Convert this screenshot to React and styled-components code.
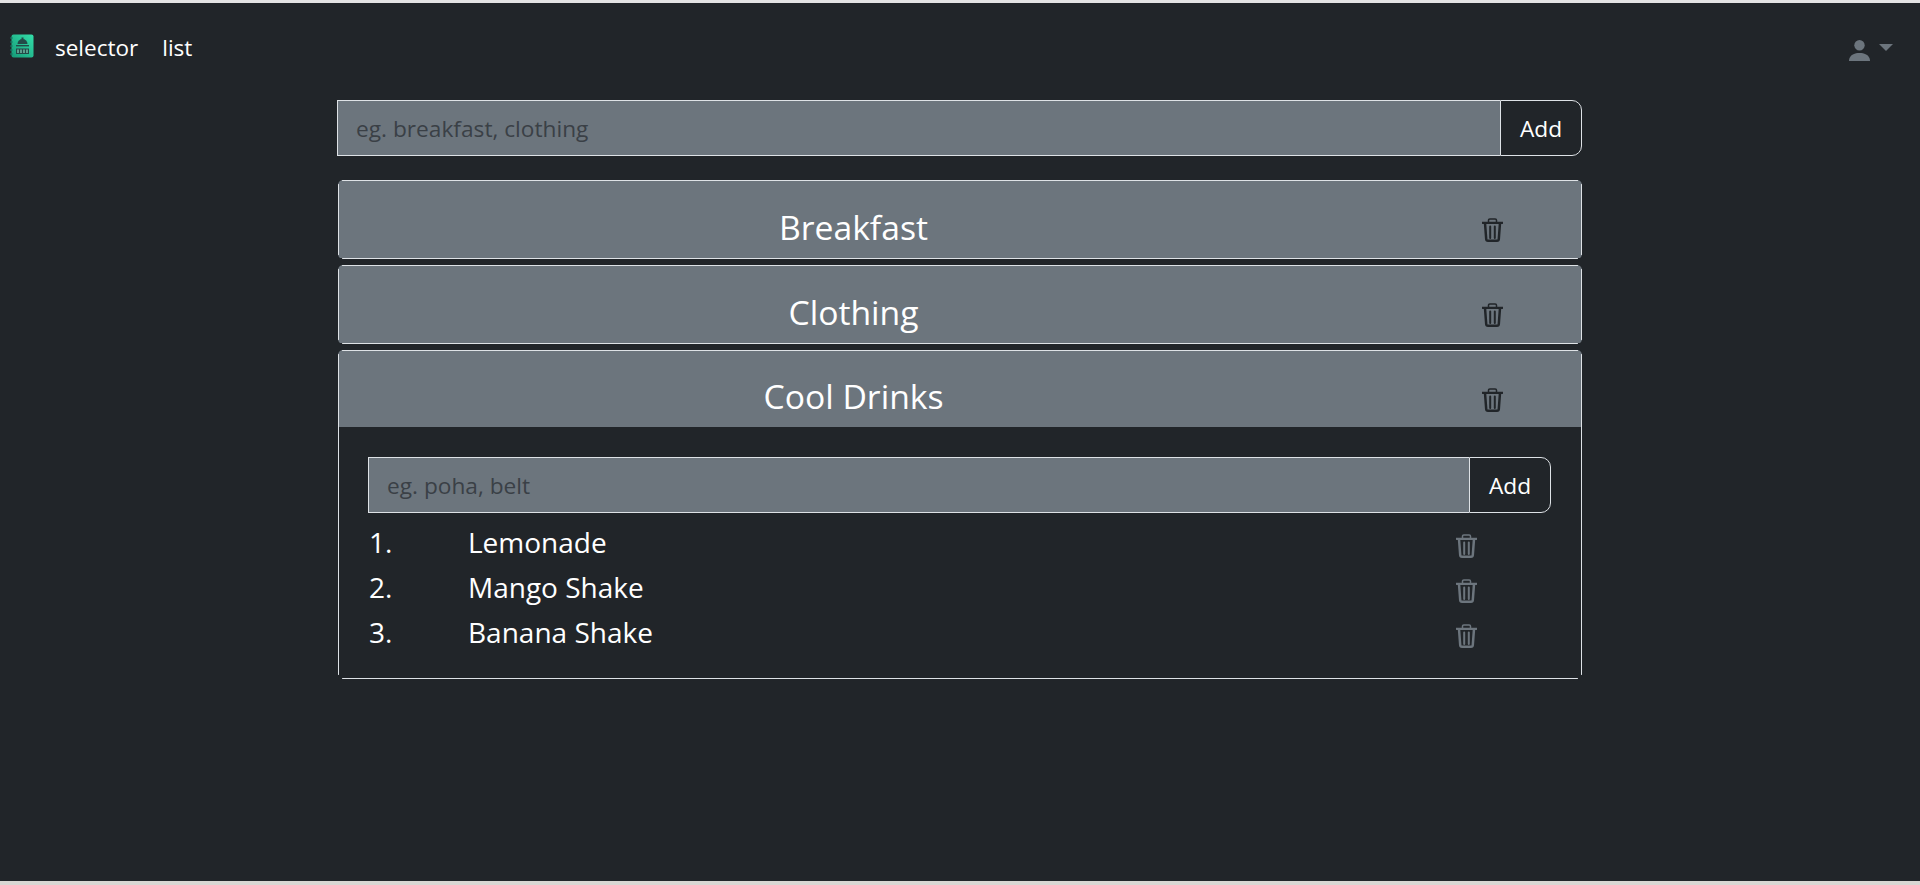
import React from "react";
import styled, { createGlobalStyle } from "styled-components";

const Global = createGlobalStyle`
  html, body { margin: 0; padding: 0; background: #212529; }
  body { font-family: "Open Sans", "Liberation Sans", sans-serif; color: #fff; overflow: hidden; }
  * { box-sizing: border-box; }
`;

const Page = styled.div`
  height: 885px;
  background: #212529;
  border-top: 3px solid #e3e3e3;
  border-bottom: 4px solid #d9d7d3;
  display: flex;
  flex-direction: column;
`;

const Nav = styled.nav`
  height: 90px;
  display: flex;
  align-items: center;
  padding: 0 27px 0 10px;
`;

const Brand = styled.div`
  display: flex;
  margin-right: 21px;
  margin-bottom: 5px;
`;

const NavLink = styled.a`
  font-size: 22.5px;
  color: #fff;
  margin-right: 24px;
  padding-bottom: 2px;
`;

const UserMenu = styled.div`
  margin-left: auto;
  display: flex;
  align-items: center;
  gap: 9px;
  margin-top: 5px;
`;

const Caret = styled.span`
  width: 0;
  height: 0;
  border-top: 7px solid #6c757d;
  border-left: 7px solid transparent;
  border-right: 7px solid transparent;
  margin-bottom: 6px;
`;

const Main = styled.main`
  width: 1245px;
  margin: 7px 0 0 337px;
`;

const InputRow = styled.div`
  display: flex;
  height: 56px;
  margin-bottom: ${(p) => p.$mb}px;
`;

const TextInput = styled.input`
  flex: 1;
  min-width: 0;
  height: 100%;
  background: #6c757d;
  border: 1px solid #dee2e6;
  border-right: 0;
  padding: 1px 18px 0;
  font: 400 22.7px "Open Sans", sans-serif;
  color: #fff;
  outline: none;
  &::placeholder { color: #3a4046; opacity: 1; }
`;

const AddButton = styled.button`
  width: 82px;
  height: 100%;
  background: #212529;
  color: #fff;
  border: 1px solid #dee2e6;
  border-radius: 0 10px 10px 0;
  font: 400 22.7px "Open Sans", sans-serif;
  padding: 1px 0 0;
`;

const Item = styled.section`
  position: relative;
  margin: 0 0 6px 1px;
  border-radius: 5px;
  overflow: hidden;
  padding: 1px;
  &::after {
    content: "";
    position: absolute;
    inset: 0;
    pointer-events: none;
    background:
      linear-gradient(#dee2e6, #dee2e6) 4px 0 / calc(100% - 8px) 1px no-repeat,
      linear-gradient(#dee2e6, #dee2e6) 4px 100% / calc(100% - 8px) 1px no-repeat,
      linear-gradient(#dee2e6, #dee2e6) 0 4px / 1px calc(100% - 8px) no-repeat,
      linear-gradient(#dee2e6, #dee2e6) 100% 4px / 1px calc(100% - 8px) no-repeat;
  }
`;

const ItemHeader = styled.header`
  height: ${(p) => (p.$open ? 76 : 77)}px;
  margin: -1px -1px 0;
  padding: 1px 1px 0;
  box-sizing: content-box;
  background: #6c757d;
  display: flex;
  align-items: center;
`;

const ItemTitle = styled.h2`
  margin: 14px 0 0;
  width: 1029px;
  text-align: center;
  font-size: 33.7px;
  font-weight: 400;
  color: #fff;
`;

const TrashSlot = styled.span`
  display: flex;
  margin-left: 114px;
  margin-top: 21px;
  color: #212529;
`;

const ItemBody = styled.div`
  padding: 30px 30px 24px 29px;
`;

const List = styled.ol`
  list-style: none;
  margin: 0;
  padding: 6px 0 0;
`;

const Row = styled.li`
  display: flex;
  align-items: center;
  height: 45px;
  font-size: 28px;
  padding-left: 1px;
`;

const Num = styled.span`
  width: 99px;
`;

const RowText = styled.span`
  width: 988px;
`;

const RowTrash = styled.span`
  display: flex;
  color: #6c757d;
  margin-top: 8px;
`;

const Logo = () => (
  <svg width="24" height="24" viewBox="0 0 24 24">
    <defs>
      <linearGradient id="lg" x1="0" y1="1" x2="1" y2="0">
        <stop offset="0" stopColor="#169a78" />
        <stop offset="1" stopColor="#33dfa9" />
      </linearGradient>
    </defs>
    <rect x="1.500" y="0.500" width="22" height="23" rx="2" fill="url(#lg)" />
    <path d="M0 4h3M0 8h3M0 12h3M0 16h3M0 20h3" stroke="#128069" strokeWidth="1.200" />
    <path d="M7.500 10a5 5 0 0 1 10 0z" fill="#234a48" />
    <rect x="11.500" y="3.500" width="2" height="2" fill="#234a48" />
    <rect x="6" y="11" width="13" height="1.400" fill="#234a48" />
    <rect x="6" y="14.500" width="13" height="5.500" fill="#234a48" />
    <path d="M8 15.500v3.500M11 15.500v3.500M14 15.500v3.500M17 15.500v3.500" stroke="#8fe3c8" strokeWidth="1.100" />
  </svg>
);

const User = () => (
  <svg width="21" height="21" viewBox="0 0 21 21" fill="#6c757d">
    <circle cx="10.500" cy="5.200" r="5.200" />
    <path d="M0 21c0-.8 0-8 10.500-8S21 20.200 21 21z" />
  </svg>
);

const Trash = () => (
  <svg width="21" height="24" viewBox="0 0 21 24" fill="none" stroke="currentColor">
    <path d="M6.500 4.500V2.300A1.300 1.300 0 0 1 7.800 1h5.400a1.300 1.300 0 0 1 1.300 1.300v2.200" strokeWidth="1.500" />
    <path d="M0.500 4.800h20" strokeWidth="2.200" strokeLinecap="round" />
    <path d="M3 5l1.200 16A1.800 1.800 0 0 0 6 22.700h9a1.800 1.800 0 0 0 1.800-1.700L18 5" strokeWidth="2.500" />
    <path d="M8.200 8.500v11.500M12.800 8.500v11.500" strokeWidth="2" strokeLinecap="round" />
  </svg>
);

const Section = ({ title, open, children }) => (
  <Item>
    <ItemHeader $open={open}>
      <ItemTitle>{title}</ItemTitle>
      <TrashSlot>
        <Trash />
      </TrashSlot>
    </ItemHeader>
    {children}
  </Item>
);

export default function App() {
  const drinks = ["Lemonade", "Mango Shake", "Banana Shake"];
  return (
    <Page>
      <Global />
      <Nav>
        <Brand>
          <Logo />
        </Brand>
        <NavLink>selector</NavLink>
        <NavLink>list</NavLink>
        <UserMenu>
          <User />
          <Caret />
        </UserMenu>
      </Nav>
      <Main>
        <InputRow $mb={24}>
          <TextInput placeholder="eg. breakfast, clothing" />
          <AddButton>Add</AddButton>
        </InputRow>
        <Section title="Breakfast" />
        <Section title="Clothing" />
        <Section title="Cool Drinks" open>
          <ItemBody>
            <InputRow $mb={0}>
              <TextInput placeholder="eg. poha, belt" />
              <AddButton>Add</AddButton>
            </InputRow>
            <List>
              {drinks.map((d, i) => (
                <Row key={d}>
                  <Num>{i + 1}.</Num>
                  <RowText>{d}</RowText>
                  <RowTrash>
                    <Trash />
                  </RowTrash>
                </Row>
              ))}
            </List>
          </ItemBody>
        </Section>
      </Main>
    </Page>
  );
}
